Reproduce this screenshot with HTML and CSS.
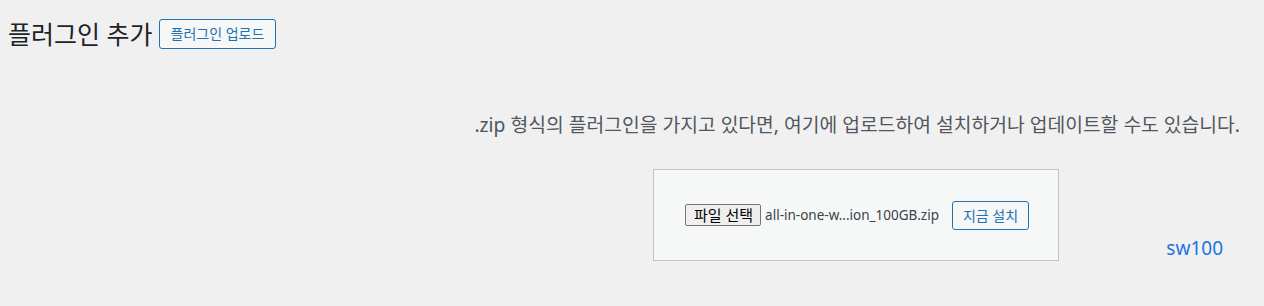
FILE: index.html
```html
<!DOCTYPE html>
<html lang="ko">
<head>
    <meta charset="UTF-8">
    <meta name="viewport" content="width=device-width, initial-scale=1.0">
    <title>플러그인 추가</title>
    <link rel="stylesheet" href="styles.css">
</head>
<body>
    <div class="wrap">
        <div class="page-header">
            <h1 class="page-title">플러그인 추가</h1>
            <a class="title-action" href="#">플러그인 업로드</a>
        </div>

        <div class="upload-plugin">
            <p class="install-help">.zip 형식의 플러그인을 가지고 있다면, 여기에 업로드하여 설치하거나 업데이트할 수도 있습니다.</p>
            <div class="upload-row">
                <form class="upload-form">
                    <label class="file-field">
                        <span class="file-button">파일 선택</span>
                        <span class="file-name">all-in-one-w...ion_100GB.zip</span>
                    </label>
                    <button type="button" class="install-button">지금 설치</button>
                </form>
                <span class="site-tag">sw100</span>
            </div>
        </div>
    </div>
</body>
</html>
```

FILE: styles.css
```css
/* Page */
body {
    margin: 0;
    background-color: #f0f0f1;
    color: #3c434a;
    font-family: "Noto Sans", "Noto Sans CJK KR", sans-serif;
}

.wrap {
    padding: 0 8px;
}

.page-header {
    display: flex;
    align-items: center;
    gap: 6px;
    padding-top: 18px;
}

.page-title {
    margin: 0;
    font-size: 25px;
    font-weight: 400;
    line-height: 32px;
    color: #1d2327;
}

.title-action {
    display: inline-block;
    height: 30px;
    box-sizing: border-box;
    padding: 0 11px;
    border: 1px solid #2271b1;
    border-radius: 3px;
    background-color: #f6f7f7;
    color: #2271b1;
    font-size: 14px;
    line-height: 28px;
    text-decoration: none;
}

/* Upload area */
.install-help {
    margin: 61px 0 0;
    padding-right: 16px;
    text-align: right;
    font-size: 19.3px;
    line-height: 28px;
    color: #50575e;
}

.upload-row {
    display: flex;
    margin-top: 30px;
}

.upload-form {
    display: flex;
    align-items: center;
    flex-shrink: 0;
    width: 406px;
    height: 92px;
    box-sizing: border-box;
    margin: 0 0 0 645px;
    padding: 0 0 0 31px;
    border: 1px solid #c3c4c7;
    background-color: #f6f7f7;
    white-space: nowrap;
}

.file-field {
    display: flex;
    align-items: center;
    flex-shrink: 0;
    gap: 4px;
}

.file-button {
    display: inline-block;
    height: 22px;
    box-sizing: border-box;
    padding: 0 7px 0 8px;
    border: 1px solid #767676;
    border-radius: 2px;
    background-color: #efefef;
    color: #000;
    font-size: 15px;
    line-height: 20px;
}

.file-name {
    font-size: 13.5px;
    color: #3c434a;
}

.install-button {
    flex-shrink: 0;
    height: 29px;
    margin-left: 13px;
    padding: 0 10px;
    border: 1px solid #2271b1;
    border-radius: 3px;
    background-color: #f6f7f7;
    color: #2271b1;
    font-family: inherit;
    font-size: 14px;
    white-space: nowrap;
    cursor: pointer;
}

.site-tag {
    align-self: flex-end;
    margin-left: auto;
    margin-right: 33px;
    font-size: 19px;
    color: #1e73e0;
}
```
